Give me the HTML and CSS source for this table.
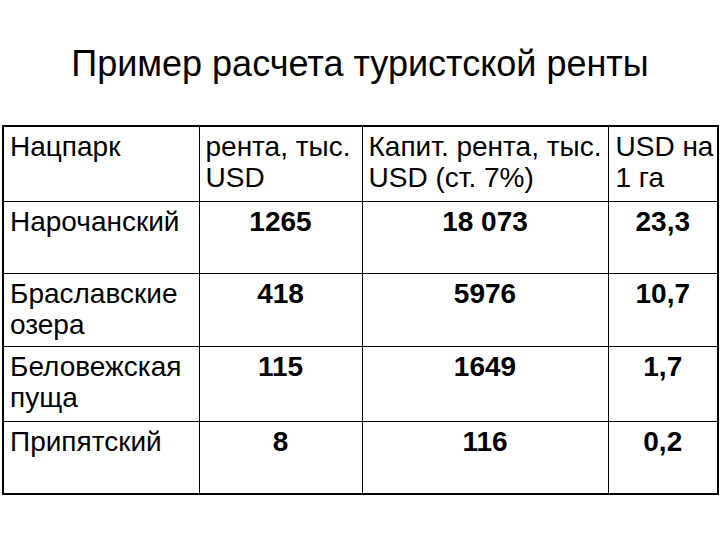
FILE: index.html
```html
<!DOCTYPE html>
<html lang="ru">
<head>
<meta charset="utf-8">
<title>Пример расчета туристской ренты</title>
<link rel="stylesheet" href="styles.css">
</head>
<body>
<div class="slide">
  <h1 class="title">Пример расчета туристской ренты</h1>
  <table class="rent">
    <colgroup>
      <col class="c1"><col class="c2"><col class="c3"><col class="c4">
    </colgroup>
    <tr class="r-head">
      <td>Нацпарк</td>
      <td>рента, тыс.<br>USD</td>
      <td>Капит. рента, тыс.<br>USD (ст. 7%)</td>
      <td class="last">USD на<br>1 га</td>
    </tr>
    <tr class="r1">
      <td>Нарочанский</td>
      <td class="num">1265</td>
      <td class="num">18 073</td>
      <td class="num">23,3</td>
    </tr>
    <tr class="r2">
      <td>Браславские<br>озера</td>
      <td class="num">418</td>
      <td class="num">5976</td>
      <td class="num">10,7</td>
    </tr>
    <tr class="r3">
      <td>Беловежская<br>пуща</td>
      <td class="num">115</td>
      <td class="num">1649</td>
      <td class="num">1,7</td>
    </tr>
    <tr class="r4">
      <td>Припятский</td>
      <td class="num">8</td>
      <td class="num">116</td>
      <td class="num">0,2</td>
    </tr>
  </table>
</div>
</body>
</html>
```
FILE: styles.css
```css
html, body {
  margin: 0;
  padding: 0;
  background: #ffffff;
}
.slide {
  width: 720px;
  height: 540px;
  font-family: "Liberation Sans", Arial, sans-serif;
  color: #000;
  padding-top: 44px;
  box-sizing: border-box;
}
.title {
  margin: 0;
  font-weight: normal;
  font-size: 36px;
  line-height: 40px;
  text-align: center;
  height: 81px;
}
.rent {
  border-collapse: collapse;
  table-layout: fixed;
  margin-left: 2px;
  width: 715px;
  border: 2px solid #000;
}
.c1 { width: 196px; }
.c2 { width: 163px; }
.c3 { width: 246px; }
.c4 { width: 110px; }
.rent td {
  border: 1px solid #000;
  vertical-align: top;
  font-size: 28px;
  line-height: 31px;
  padding: 4px 0 0 6px;
  white-space: nowrap;
  overflow: hidden;
}
.rent td.last {
  padding-left: 7px;
}
.rent td.num {
  text-align: center;
  font-weight: bold;
  padding-left: 0;
  padding-right: 0;
}
.r-head { height: 75px; }
.r1 { height: 72px; }
.r2 { height: 73px; }
.r3 { height: 75px; }
.r4 { height: 73px; }
```
